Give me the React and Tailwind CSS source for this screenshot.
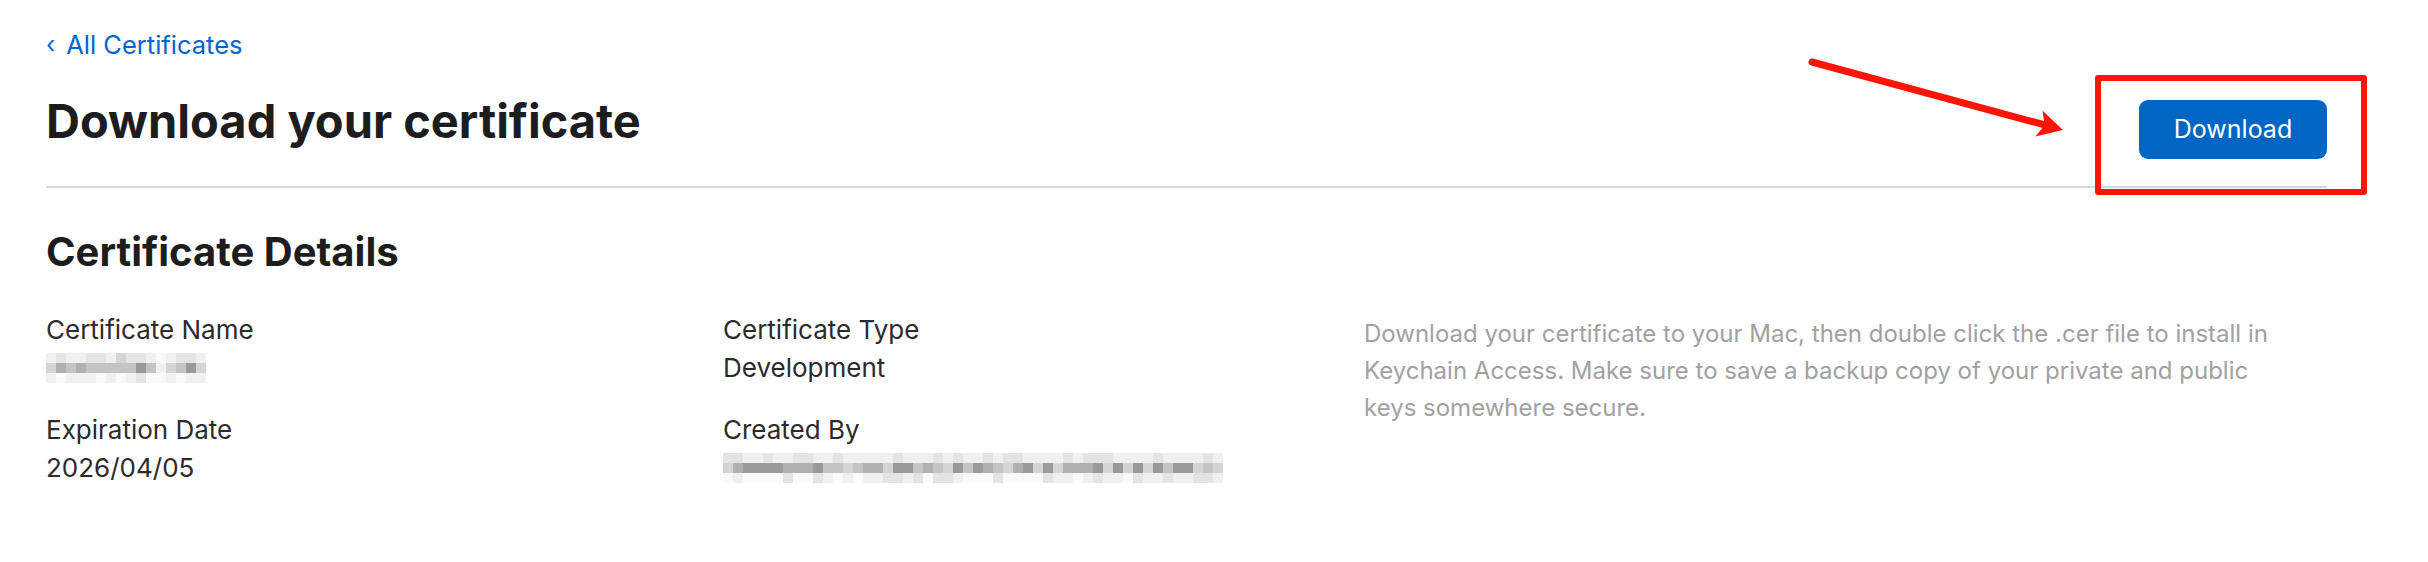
import React from 'react'

const shades = [
  'bg-[#fafafa]',
  'bg-[#f0f0f0]',
  'bg-[#e4e4e4]',
  'bg-[#d4d4d4]',
  'bg-[#c4c4c4]',
  'bg-[#b0b0b0]',
  'bg-[#9a9a9a]',
]

// redacted values are drawn as a pixel mosaic, like the screenshot
const nameRows = ['1211221322101221', '3545444446413463', '1011101012001011']

function makeRows(cols, seed) {
  let s = seed
  const next = () => {
    s = (s * 9301 + 49297) % 233280
    return s / 233280
  }
  const ranges = [
    [1, 2],
    [3, 6],
    [0, 2],
  ]
  return ranges.map(([lo, hi]) =>
    Array.from({ length: cols }, () => String(lo + Math.floor(next() * (hi - lo + 1)))).join('')
  )
}

const creatorRows = makeRows(50, 17)

function Mosaic({ rows }) {
  return (
    <div className="flex h-[38px] flex-col justify-center">
      {rows.map((row, r) => (
        <div key={r} className="flex">
          {row.split('').map((c, i) => (
            <span key={i} className={`h-[10px] w-[10px] ${shades[Number(c)]}`} />
          ))}
        </div>
      ))}
    </div>
  )
}

function Field({ label, children, className = '' }) {
  return (
    <div className={className}>
      <div className="text-[26px] leading-[38px] text-[#2b2b2b]">{label}</div>
      {typeof children === 'string' ? (
        <div className="text-[26px] leading-[38px] text-[#2b2b2b]">{children}</div>
      ) : (
        children
      )}
    </div>
  )
}

export default function App() {
  return (
    <div className="relative min-h-screen bg-white font-['Inter',sans-serif]">
      <div className="pl-[46px] pr-[101px] pt-[26px]">
        <a href="#" className="flex items-center text-[25.5px] leading-[38px] text-[#0066cc]">
          <span className="mr-[11px] text-[24px]">‹</span>
          All Certificates
        </a>

        <div className="mt-[29px] flex items-start justify-between border-b-2 border-[#d8d8d8] pb-[27px]">
          <h1 className="text-[47px] font-bold leading-[56px] text-[#1d1d1f]">
            Download your certificate
          </h1>
          <button className="mt-[7px] h-[59px] w-[188px] rounded-[9px] bg-[#0066c4] text-[25px] text-white">
            Download
          </button>
        </div>

        <h2 className="mt-[40px] text-[40px] font-bold leading-[48px] text-[#1d1d1f]">
          Certificate Details
        </h2>

        <div className="mt-[35px] grid grid-cols-[677px_641px_1fr]">
          <div>
            <Field label="Certificate Name">
              <Mosaic rows={nameRows} />
            </Field>
            <Field label="Expiration Date" className="mt-[24px]">
              2026/04/05
            </Field>
          </div>
          <div>
            <Field label="Certificate Type">Development</Field>
            <Field label="Created By" className="mt-[24px]">
              <Mosaic rows={creatorRows} />
            </Field>
          </div>
          <p className="mt-[4px] text-[24px] leading-[37px] text-[#a1a1a1]">
            Download your certificate to your Mac, then double click the .cer file to install in
            Keychain Access. Make sure to save a backup copy of your private and public
            <br />
            keys somewhere secure.
          </p>
        </div>
      </div>

      {/* annotation: red arrow and box around the button */}
      <svg
        className="pointer-events-none absolute left-[1800px] top-[50px]"
        width="280"
        height="100"
        viewBox="0 0 280 100"
      >
        <line x1="12" y1="12" x2="245" y2="75" stroke="#ff1408" strokeWidth="7" strokeLinecap="round" />
        <polygon points="263,80 242.4,60.4 244.7,75 235.4,86.5" fill="#ff1408" />
      </svg>
      <div className="pointer-events-none absolute left-[2095px] top-[75px] h-[120px] w-[272px] rounded-[3px] border-[6px] border-[#ff1408]" />
    </div>
  )
}
